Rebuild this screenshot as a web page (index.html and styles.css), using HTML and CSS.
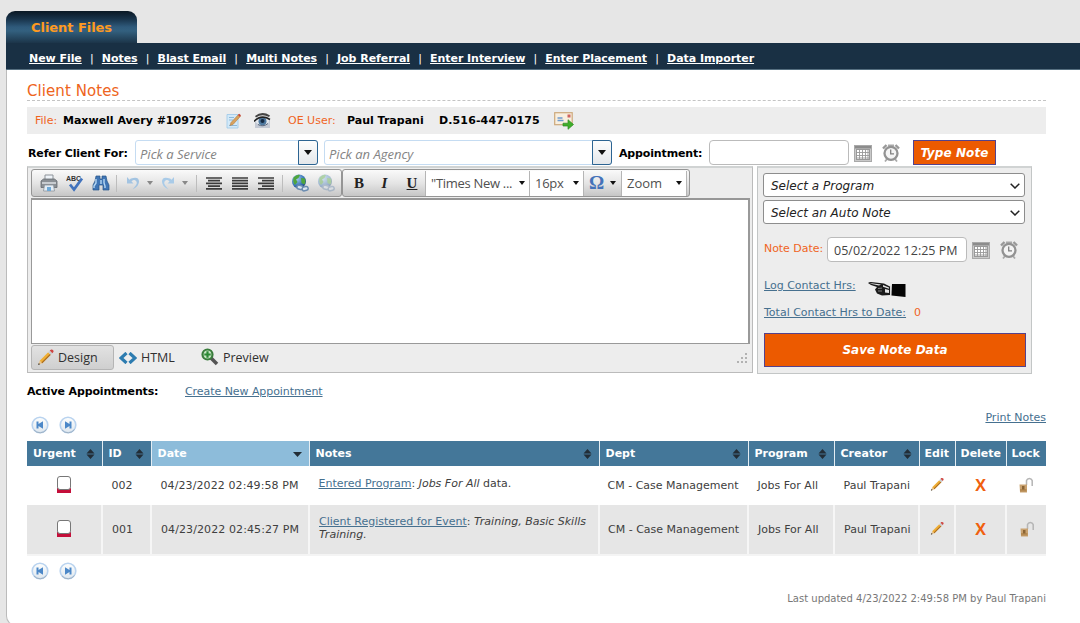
FILE: index.html
```html
<!DOCTYPE html>
<html lang="en">
<head>
    <meta charset="UTF-8">
    <title>Client Notes</title>
    <link rel="stylesheet" href="styles.css">
</head>
<body>

    <!-- shared icons -->
    <svg class="sprite" width="0" height="0">
        <defs>
            <linearGradient id="ball" x1="0" y1="0" x2="0" y2="1">
                <stop offset="0" stop-color="#fdfefe"/>
                <stop offset="1" stop-color="#dfe7ee"/>
            </linearGradient>
            <radialGradient id="globe" cx=".35" cy=".3" r=".8">
                <stop offset="0" stop-color="#a6cdf0"/>
                <stop offset=".6" stop-color="#3d78b8"/>
                <stop offset="1" stop-color="#1c3f78"/>
            </radialGradient>
        </defs>
        <symbol id="calendar" viewBox="0 0 18 17">
            <rect x=".5" y=".5" width="17" height="16" fill="#c9c9c9" stroke="#a9a9a9"/>
            <rect x="1" y="1" width="16" height="2.5" fill="#8c8c8c"/>
            <rect x="2.5" y="4.5" width="13" height="10" fill="#fff" stroke="#999"/>
            <path d="M5.5 4.500v10M8.500 4.500v10M11.500 4.500v10M14 4.500v10M2.500 7.500h13M2.500 10.500h13M2.500 13h13" stroke="#999" stroke-width=".9"/>
        </symbol>
        <symbol id="clock" viewBox="0 0 18 18">
            <path d="M1 4.500 4.500 1M17 4.500 13.500 1" stroke="#999" stroke-width="2.400"/>
            <path d="M3 17.500l2-2.500M15 17.500 13 15M6 1.500h6" stroke="#aaa" stroke-width="1.800"/>
            <circle cx="9" cy="9.300" r="6.500" fill="#f4f4f4" stroke="#929292" stroke-width="2.300"/>
            <path d="M8.700 5.500v4.300H12" fill="none" stroke="#808080" stroke-width="1.300"/>
        </symbol>
        <symbol id="pencil" viewBox="0 0 16 16">
            <path d="M1 15l1.500-4L5 13.500z" fill="#e9c58f"/>
            <path d="M1 15l.7-1.900 1.200 1.200z" fill="#333"/>
            <path d="M2.500 11 10.500 3 13 5.500 5 13.500z" fill="#efae35"/>
            <path d="M4.200 12.700 12.200 4.700 13 5.500 5 13.500z" fill="#a96b22"/>
            <path d="M10.500 3l1.500-1.500L14.500 4 13 5.500z" fill="#c9cdd0"/>
            <path d="M12 1.500 13 .700Q14.300.200 15.200 1.200T15 3.400L14.500 4z" fill="#cf4541"/>
        </symbol>
        <symbol id="prev" viewBox="0 0 18 18">
            <circle cx="9" cy="9" r="7.800" fill="url(#ball)" stroke="#b9d3ef" stroke-width="1.600"/>
            <path d="M3 14a8 8 0 0 0 12.500-.5" fill="none" stroke="#9fb1c2" stroke-width="1"/>
            <path d="M5.500 5.500h2V8l4.500-2.800v7.600L7.500 10v2.500h-2z" fill="#4c88c8"/>
        </symbol>
        <symbol id="next" viewBox="0 0 18 18">
            <circle cx="9" cy="9" r="7.800" fill="url(#ball)" stroke="#b9d3ef" stroke-width="1.600"/>
            <path d="M3 14a8 8 0 0 0 12.500-.5" fill="none" stroke="#9fb1c2" stroke-width="1"/>
            <path d="M12.500 5.500h-2V8L6 5.200v7.600l4.500-2.800v2.500h2z" fill="#4c88c8"/>
        </symbol>
        <symbol id="sort" viewBox="0 0 8 10">
            <path d="M4 0 8 4.500H0zM4 10 0 5.500h8z" fill="#222d36"/>
        </symbol>
        <symbol id="lock" viewBox="0 0 14 17">
            <path d="M7.500 9V4.500a3 3 0 0 1 5.700 0V10" fill="none" stroke="#b5b5b5" stroke-width="1.500"/>
            <path d="M.5 8.500h7.500v8H1z" fill="#c9a270"/>
            <path d="M1 13h6.500v2.500H1z" fill="#b58a52"/>
            <path d="M3 10h2.500v3.500H3z" fill="#8a6434"/>
        </symbol>
        <symbol id="world" viewBox="0 0 18 18">
            <circle cx="8" cy="7.500" r="7" fill="url(#globe)"/>
            <path d="M2.500 3.500Q6 0 9 1L7.500 4 5 5.500 6.500 8 4 11Q1.500 8 2.500 3.500zM10 4l4 .5q1 3-.5 6L10.500 9z" fill="#4fa63c"/>
            <rect x="6" y="11.500" width="6" height="3.800" rx="1.900" transform="rotate(15 9 13)" fill="#dbe5f0" stroke="#6b8cb0" stroke-width="1.500"/>
            <rect x="11" y="12.800" width="6" height="3.800" rx="1.900" transform="rotate(-15 14 14)" fill="#dbe5f0" stroke="#6b8cb0" stroke-width="1.500"/>
        </symbol>
    </svg>

    <div class="tab">Client Files</div>

    <div class="wrapper">
        <div class="nav">
            <a href="#">New File</a><i>|</i><a href="#">Notes</a><i>|</i><a href="#">Blast Email</a><i>|</i><a href="#">Multi Notes</a><i>|</i><a href="#">Job Referral</a><i>|</i><a href="#">Enter Interview</a><i>|</i><a href="#">Enter Placement</a><i>|</i><a href="#">Data Importer</a>
        </div>

        <div class="content">
            <h1>Client Notes</h1>

            <div class="infobar">
                <span class="orange file-label">File:</span>
                <b class="file-name">Maxwell Avery #109726</b>
                <svg class="icon-note" width="15" height="16" viewBox="0 0 15 16">
                    <path d="M1 1.500h11V15H1z" fill="#d3e9f8" stroke="#9cc8e8" stroke-width=".8"/>
                    <path d="M3 4.500h5M3 7h4M3 12.500h8" stroke="#8fb9d9"/>
                    <path d="M4 12.500 5 9.500 12.500 1.500 14.500 3.200 7 11.500z" fill="#d9a25c" stroke="#a97236" stroke-width=".5"/>
                    <path d="M12 2l1.200-1.300 1.800 1.600-1.200 1.400z" fill="#c9423a"/>
                </svg>
                <svg class="icon-eye" width="17" height="17" viewBox="0 0 17 17">
                    <path d="M1 16V9l4-3h9l2 1v9z" fill="#c3c9d4"/>
                    <path d="M1 4Q8-1.500 16 3.500L15 5Q8 1.500 2 5.500z" fill="#444"/>
                    <path d="M.5 9Q7 3 15.500 7.500L14 12Q8 15.500 4 12z" fill="#e5e9ee"/>
                    <circle cx="8.500" cy="9.300" r="4" fill="#4d789f"/>
                    <circle cx="8.500" cy="9" r="2" fill="#152a42"/>
                    <path d="M0 9.500Q7 2 16 7.500" fill="none" stroke="#222" stroke-width="1.600"/>
                    <path d="M4 12.500Q9 15.500 14 11.500" fill="none" stroke="#55637a"/>
                </svg>
                <span class="orange user-label">OE User:</span>
                <b class="user-name">Paul Trapani</b>
                <b class="phone">D.516-447-0175</b>
                <svg class="icon-mail" width="20" height="18" viewBox="0 0 20 18">
                    <rect x=".7" y=".7" width="17.500" height="12" fill="#f9efdf" stroke="#cda87b" stroke-width="1.200"/>
                    <path d="M3.500 6h5M3.500 8.500h6" stroke="#6d9bd0" stroke-width="1.300"/>
                    <rect x="13.500" y="2.500" width="3" height="3" fill="#d0635f"/>
                    <path d="M9 11.200h5V7.700l5.500 4.800-5.500 4.800v-3.300H9z" fill="#3fae2a" stroke="#2d8a20" stroke-width=".7"/>
                </svg>
            </div>

            <div class="refer">
                <b class="refer-label">Refer Client For:</b>
                <div class="combo service"><span>Pick a Service</span><em></em></div>
                <div class="combo agency"><span>Pick an Agency</span><em></em></div>
                <b class="app-label">Appointment:</b>
                <div class="textbox"></div>
                <svg class="cal" width="18" height="17"><use href="#calendar"/></svg>
                <svg class="clk" width="18" height="18"><use href="#clock"/></svg>
                <button class="btn type-note">Type Note</button>
            </div>

            <div class="main">
                <div class="editor">
                    <div class="toolbar">
                        <div class="group tools">
                            <svg width="18" height="18" viewBox="0 0 18 18">
                                <path d="M5 1h8v6H5z" fill="#eef3f8" stroke="#8d9399"/>
                                <path d="M1 7l2.500-2h11L17 7v6.500H1z" fill="#8b9095" stroke="#656a6e" stroke-width=".8"/>
                                <path d="M2 8h14v2H2z" fill="#c8ccd0"/>
                                <path d="M4.500 11h9l1 6h-11z" fill="#e3edf6" stroke="#8d9399" stroke-width=".8"/>
                                <path d="M7 13h4v4H7z" fill="#6fa9d6"/>
                            </svg>
                            <svg width="18" height="18" viewBox="0 0 18 18">
                                <text x="0" y="6.500" class="abc">ABC</text>
                                <path d="M4 10.500 8 15.500 16 4.500" fill="none" stroke="#4273bd" stroke-width="2.800"/>
                            </svg>
                            <svg width="18" height="18" viewBox="0 0 18 18">
                                <path d="M4 2h4v3h2V2h4l1 5 2 4v5h-6v-5H7v5H1v-5l2-4z" fill="#3f75b5" stroke="#275486" stroke-width=".7"/>
                                <path d="M4 5v4l-2 3v2M12 5v4l1 3v2M9 6v4" fill="none" stroke="#b4d6f3" stroke-width="1.400"/>
                            </svg>
                            <s></s>
                            <svg class="undo" width="14" height="16" viewBox="0 0 14 16">
                                <path d="M1 2v6.500h6.500L5.500 6.500Q8 4 10 6T9 11.500L6.500 14.500Q13.500 11 13 6T5 3.500L3.500 4.800z" fill="#a3c4e2"/>
                            </svg>
                            <u class="dim"></u>
                            <svg class="redo" width="14" height="16" viewBox="0 0 14 16">
                                <path d="M13 2v6.500H6.500l2-2Q6 4 4 6t1 5.500l2.500 3Q.5 11 1 6t8-2.500l1.500 1.300z" fill="#a9cbe8"/>
                            </svg>
                            <u class="dim"></u>
                            <s class="second"></s>
                            <svg class="lines" width="16" height="13" viewBox="0 0 16 13"><path d="M0 1h16M2 3.700h12M0 6.400h16M2 9.100h12M0 11.800h16" stroke="#3c3c3c" stroke-width="1.700"/></svg>
                            <svg class="lines" width="16" height="13" viewBox="0 0 16 13"><path d="M0 1h16M0 3.700h16M0 6.400h16M0 9.100h16M0 11.800h16" stroke="#3c3c3c" stroke-width="1.700"/></svg>
                            <svg class="lines" width="16" height="13" viewBox="0 0 16 13"><path d="M0 1h16M4 3.700h12M0 6.400h16M4 9.100h12M0 11.800h16" stroke="#3c3c3c" stroke-width="1.700"/></svg>
                            <s class="third"></s>
                            <svg class="link" width="18" height="18"><use href="#world"/></svg>
                            <svg class="unlink" width="18" height="18"><use href="#world"/></svg>
                        </div>
                        <div class="group format">
                            <span class="bold">B</span>
                            <span class="italic">I</span>
                            <span class="under">U</span>
                            <div class="drop font">"Times New ...<u></u></div>
                            <div class="drop size">16px<u></u></div>
                            <div class="omega">Ω<u></u></div>
                            <div class="drop zoom">Zoom<u></u></div>
                        </div>
                    </div>
                    <div class="area"></div>
                    <div class="modes">
                        <div class="mode active">
                            <svg width="17" height="17"><use href="#pencil"/></svg>Design
                        </div>
                        <div class="mode html">
                            <svg width="18" height="12" viewBox="0 0 18 12"><path d="M7.500 1 2 6l5.500 5M10.500 1 16 6l-5.500 5" fill="none" stroke="#2d7cb0" stroke-width="3.200"/></svg>HTML
                        </div>
                        <div class="mode preview">
                            <svg width="18" height="18" viewBox="0 0 18 18">
                                <path d="M10 10l6 6" stroke="#555" stroke-width="3.500"/>
                                <circle cx="6.500" cy="6.500" r="5" fill="#c9e6c6" stroke="#3a7d3c" stroke-width="2.200"/>
                                <path d="M6.500 3.300v6.400M3.300 6.500h6.400" stroke="#2c8a35" stroke-width="2.200"/>
                            </svg>Preview
                        </div>
                        <svg class="grip" width="12" height="12" viewBox="0 0 12 12"><path d="M9 1h2M9 5h2M5 5h2M9 9h2M5 9h2M1 9h2" stroke="#b2b2b2" stroke-width="2"/></svg>
                    </div>
                </div>

                <div class="side">
                    <div class="select">Select a Program<svg width="10" height="6" viewBox="0 0 10 6"><path d="M.7.700 5 5 9.300.700" fill="none" stroke="#222" stroke-width="1.500"/></svg></div>
                    <div class="select">Select an Auto Note<svg width="10" height="6" viewBox="0 0 10 6"><path d="M.7.700 5 5 9.300.700" fill="none" stroke="#222" stroke-width="1.500"/></svg></div>
                    <div class="date-row">
                        <span class="orange">Note Date:</span>
                        <div class="textbox">05/02/2022 12:25 PM</div>
                        <svg class="cal" width="18" height="17"><use href="#calendar"/></svg>
                        <svg class="clk" width="18" height="18"><use href="#clock"/></svg>
                    </div>
                    <div class="log-row">
                        <a href="#">Log Contact Hrs:</a>
                        <svg width="38" height="17" viewBox="0 0 38 17">
                            <path d="M0 2Q1 1 3 1L16 2.500 22 5.500V14l-8 .5-5-2-2-4L9 6 3 4z" fill="#1b1b1b"/>
                            <path d="M1.500 2 13 3.500 11 4.500 4 3zM15 4l6 2.500v1.200l-6-2zM17 8l4 1v3l-4-.5z" fill="#e4e4e4"/>
                            <path d="M10 7.500l4-.4M10 10h4" stroke="#999" stroke-width=".8"/>
                            <path d="M22 5 24 4v10l-2 .5z" fill="#ddd"/>
                            <path d="M24 3h13.500v13L23.500 14.500z" fill="#050505"/>
                        </svg>
                    </div>
                    <div class="total-row"><a href="#">Total Contact Hrs to Date:</a><span class="orange">0</span></div>
                    <button class="btn save">Save Note Data</button>
                </div>
            </div>

            <div class="appointments">
                <b>Active Appointments:</b>
                <a href="#">Create New Appointment</a>
            </div>

            <div class="pager top">
                <svg width="18" height="18"><use href="#prev"/></svg>
                <svg width="18" height="18"><use href="#next"/></svg>
                <a href="#">Print Notes</a>
            </div>

            <table>
                <colgroup>
                    <col class="c-urgent"><col class="c-id"><col class="c-date"><col class="c-notes"><col class="c-dept">
                    <col class="c-program"><col class="c-creator"><col class="c-edit"><col class="c-delete"><col class="c-lock">
                </colgroup>
                <thead>
                    <tr>
                        <th><div>Urgent<svg width="9" height="10"><use href="#sort"/></svg></div></th>
                        <th><div>ID<svg width="9" height="10"><use href="#sort"/></svg></div></th>
                        <th class="sorted"><div>Date<svg width="9" height="5" viewBox="0 0 9 5"><path d="M0 0h9L4.500 5z" fill="#222d36"/></svg></div></th>
                        <th><div>Notes<svg width="9" height="10"><use href="#sort"/></svg></div></th>
                        <th><div>Dept<svg width="9" height="10"><use href="#sort"/></svg></div></th>
                        <th><div>Program<svg width="9" height="10"><use href="#sort"/></svg></div></th>
                        <th><div>Creator<svg width="9" height="10"><use href="#sort"/></svg></div></th>
                        <th><div>Edit</div></th>
                        <th><div>Delete</div></th>
                        <th><div>Lock</div></th>
                    </tr>
                </thead>
                <tbody>
                    <tr>
                        <td class="center"><span class="check"></span></td>
                        <td>002</td>
                        <td class="date">04/23/2022 02:49:58 PM</td>
                        <td class="note"><a href="#">Entered Program</a>: <em>Jobs For All</em> data.</td>
                        <td class="dept">CM - Case Management</td>
                        <td>Jobs For All</td>
                        <td>Paul Trapani</td>
                        <td class="center"><svg width="14" height="15"><use href="#pencil"/></svg></td>
                        <td class="center"><b class="x">X</b></td>
                        <td class="center"><svg width="14" height="17"><use href="#lock"/></svg></td>
                    </tr>
                    <tr class="alt">
                        <td class="center"><span class="check"></span></td>
                        <td>001</td>
                        <td class="date">04/23/2022 02:45:27 PM</td>
                        <td class="note"><a href="#">Client Registered for Event</a>: <em>Training, Basic Skills<br>Training.</em></td>
                        <td class="dept">CM - Case Management</td>
                        <td>Jobs For All</td>
                        <td>Paul Trapani</td>
                        <td class="center"><svg width="14" height="15"><use href="#pencil"/></svg></td>
                        <td class="center"><b class="x">X</b></td>
                        <td class="center"><svg width="14" height="17"><use href="#lock"/></svg></td>
                    </tr>
                </tbody>
            </table>

            <div class="pager bottom">
                <svg width="18" height="18"><use href="#prev"/></svg>
                <svg width="18" height="18"><use href="#next"/></svg>
            </div>

            <div class="updated">Last updated 4/23/2022 2:49:58 PM by Paul Trapani</div>
        </div>
    </div>

</body>
</html>
```
FILE: styles.css
```css
* {
    box-sizing: border-box;
}

body {
    margin: 0;
    padding: 11px 0 0 6px;
    height: 623px;
    overflow: hidden;
    background-color: #e6e6e6;
    font-family: Verdana, "DejaVu Sans", sans-serif;
    font-size: 11px;
    line-height: 14px;
    color: #000;
    white-space: nowrap;
}

a {
    color: #46708f;
}
svg {
    display: block;
    flex-shrink: 0;
}
.sprite {
    position: absolute;
}
.orange {
    color: #f0641e;
}

.tab {
    width: 131px;
    height: 32px;
    border-radius: 9px 9px 0 0;
    background: linear-gradient(#0a1824, #18334a 25%, #2f5a7b 50%, #33607f 62%, #1c3549 100%);
    color: #ff9a1f;
    font-size: 13px;
    font-weight: bold;
    line-height: 33px;
    padding-left: 25px;
    letter-spacing: -0.05px;
}

.wrapper {
    height: 583px;
    background-color: #fff;
    border-left: 1px solid #bbb;
    border-bottom: 1px solid #aaa;
    border-bottom-left-radius: 10px;
}
.nav {
    height: 27px;
    margin-left: -1px;
    padding: 9px 0 0 23px;
    background-color: #193044;
    border-bottom: 1px solid #566f80;
    color: #fff;
    font-weight: bold;
    letter-spacing: -0.05px;
}
.nav a {
    color: #fff;
}
.nav i {
    display: inline-block;
    width: 20px;
    text-align: center;
    font-style: normal;
    font-weight: normal;
}

.content {
    width: 1019px;
    margin-left: 20px;
}
h1 {
    height: 31px;
    margin: 0 0 6px;
    padding-top: 11px;
    border-bottom: 1px dashed #c4c4c4;
    color: #ee6420;
    font-size: 15px;
    font-weight: normal;
    line-height: 20px;
    letter-spacing: 0.08px;
}

.infobar {
    display: flex;
    align-items: center;
    height: 27px;
    padding-left: 8px;
    background-color: #ededed;
}
.file-label {
    width: 28px;
}
.file-name {
    width: 163px;
}
.icon-eye {
    margin-left: 13px;
}
.user-label {
    margin-left: 17px;
    width: 59px;
}
.user-name {
    width: 92px;
}
.phone {
    width: 115px;
    letter-spacing: 0.13px;
}

.refer {
    display: flex;
    height: 25px;
    margin-top: 6px;
    line-height: 27px;
}
.refer-label {
    width: 108px;
    padding-left: 1px;
    letter-spacing: -0.12px;
}
.combo {
    display: flex;
    border: 1px solid #c5dcf2;
    border-radius: 3px;
    background-color: #fff;
    font: italic 13px/26px "Open Sans", sans-serif;
    color: #848484;
}
.combo span {
    flex: 1;
    padding-left: 4px;
}
.combo em {
    width: 20px;
    margin: -1px;
    border: 1px solid #2c6492;
    border-radius: 0 3px 3px 0;
    background: linear-gradient(#fdfdfd, #e4e7ea);
}
.combo em::after,
u::after {
    content: "";
    display: block;
    margin: 9px auto 0;
    width: 0;
    border: 4px solid transparent;
    border-top: 5px solid #111;
    border-bottom: 0;
}
.service {
    width: 183px;
    margin-right: 6px;
}
.agency {
    width: 288px;
}
.app-label {
    width: 97px;
    padding-left: 7px;
    letter-spacing: -0.15px;
}
.textbox {
    width: 140px;
    height: 25px;
    border: 1px solid #bbb;
    border-radius: 4px;
    background-color: #fff;
}
.cal {
    margin: 5px 0 0 5px;
}
.clk {
    margin: 4px 0 0 10px;
}
.btn {
    padding: 0;
    border: 1px solid #54428c;
    background-color: #ec5a00;
    color: #fff;
    font: italic bold 12px Verdana, "DejaVu Sans", sans-serif;
}
.type-note {
    width: 83px;
    margin-left: 13px;
    letter-spacing: 0.1px;
}

.main {
    display: flex;
    gap: 4px;
    margin-top: 1px;
}
.editor {
    width: 726px;
    height: 207px;
    padding: 1px 2px 0 3px;
    border: 1px solid #bbb;
    border-top: 2px solid #d0d3d3;
    background-color: #ededed;
}
.toolbar {
    display: flex;
    height: 28px;
    margin-bottom: 1px;
}
.group {
    display: flex;
    align-items: center;
    height: 28px;
    border: 1px solid #959595;
    border-radius: 3px;
    background: linear-gradient(#fafafa, #e5e5e5 50%, #c6c6c6);
}
.tools {
    width: 311px;
    padding-left: 8px;
    gap: 8px;
}
.tools s {
    width: 1px;
    height: 17px;
    margin: 0 1px 0 -2px;
    background-color: #bdbdbd;
}
.tools .second {
    margin-left: 0;
}
.tools .third {
    margin-right: 0;
}
.abc {
    font: bold 7px "Liberation Sans", sans-serif;
    fill: #333;
}
.undo,
.redo {
    margin-right: -1px;
}
u {
    display: block;
}
u::after {
    margin: 0;
    border-width: 4px 3.5px 0;
}
u.dim::after {
    border-top-color: #888;
}
.lines {
    margin-right: 2px;
}
.unlink {
    opacity: .4;
}

.format {
    width: 348px;
    padding-left: 11px;
    font: 13px/24px "Open Sans", sans-serif;
    color: #505050;
}
.bold,
.italic,
.under {
    width: 20px;
    font: bold 15px/24px "Liberation Serif", serif;
    color: #222;
}
.italic {
    width: 21px;
    font-style: italic;
    text-align: center;
}
.under {
    width: 30px;
    padding-left: 4px;
    text-decoration: underline;
    text-align: center;
}
.drop {
    display: flex;
    justify-content: space-between;
    align-items: center;
    height: 25px;
    padding: 0 4px 0 5px;
    border-right: 1px solid #b5b5b5;
    border-left: 1px solid #b5b5b5;
    background-color: #fff;
}
.font {
    width: 105px;
    letter-spacing: -0.3px;
}
.size {
    width: 54px;
    border-left: 0;
    letter-spacing: -0.3px;
}
.omega {
    display: flex;
    align-items: center;
    gap: 6px;
    width: 37px;
    padding-left: 5px;
    font: bold 19px/24px "Liberation Serif", serif;
    color: #4472b9;
}
.zoom {
    width: 66px;
}

.area {
    height: 146px;
    border: 1px solid #999;
    border-top: 2px solid #979797;
    border-right-width: 2px;
    background-color: #fff;
}
.modes {
    display: flex;
    padding-top: 1px;
    font: 12.5px/24px "Open Sans", sans-serif;
    color: #303030;
}
.mode {
    display: flex;
    align-items: center;
    height: 25px;
}
.active {
    width: 83px;
    padding-left: 5px;
    gap: 4px;
    border: 1px solid #b5b5b5;
    border-radius: 3px;
    background: linear-gradient(#e2e2e2, #cfcfcf);
}
.html {
    margin-left: 5px;
    gap: 4px;
}
.preview {
    margin-left: 26px;
    gap: 4px;
}
.preview svg {
    margin-top: -2px;
}
.grip {
    margin: 8px 2px 0 auto;
}

.side {
    width: 275px;
    height: 208px;
    padding: 5px 5px 0;
    border: 1px solid #c3c6c6;
    border-top: 2px solid #d0d3d3;
    background-color: #ededed;
}
.select {
    display: flex;
    align-items: center;
    justify-content: space-between;
    width: 262px;
    height: 24px;
    margin-bottom: 3px;
    padding: 2px 4px 0 7px;
    border: 1px solid #8d8d8d;
    border-radius: 3px;
    background-color: #fff;
    font-size: 12px;
    font-style: italic;
    color: #222;
}
.date-row {
    display: flex;
    margin-top: 13px;
}
.date-row .orange {
    width: 64px;
    padding: 5px 0 0 1px;
    letter-spacing: -0.05px;
}
.date-row .textbox {
    padding-left: 6px;
    font: 12.5px/26px "Open Sans", sans-serif;
    color: #444;
}
.log-row {
    display: flex;
    gap: 12px;
    height: 27px;
    margin-top: 17px;
    padding-left: 1px;
}
.log-row svg {
    margin-top: 2px;
}
.total-row {
    display: flex;
    gap: 8px;
    padding-left: 1px;
}
.save {
    display: block;
    width: 262px;
    height: 34px;
    margin: 13px 0 0 1px;
}

.appointments {
    display: flex;
    margin-top: 11px;
}
.appointments b {
    width: 158px;
    letter-spacing: -0.14px;
}
.appointments a {
    letter-spacing: -0.06px;
}
.pager {
    display: flex;
    gap: 10px;
    padding-left: 4px;
}
.top {
    margin-top: 17px;
    height: 25px;
}
.top a {
    margin: -5px 0 0 auto;
}

table {
    width: 1019px;
    table-layout: fixed;
    border-collapse: collapse;
    color: #404040;
}
.c-urgent { width: 75px; }
.c-id { width: 49px; }
.c-date { width: 158px; }
.c-notes { width: 290px; }
.c-dept { width: 149px; }
.c-program { width: 86px; }
.c-creator { width: 85px; }
.c-edit { width: 36px; }
.c-delete { width: 51px; }
.c-lock { width: 40px; }
th {
    height: 25px;
    padding: 1px 7px 0 6px;
    border-right: 1px solid #e4edf3;
    border-left: 1px solid #e4edf3;
    background-color: #447799;
    color: #fff;
    text-align: left;
}
th:first-child {
    border-left: 0;
}
th:nth-child(n+8) {
    padding-right: 0;
    padding-left: 5px;
}
th:last-child,
td:last-child {
    border-right: 0;
}
th div {
    display: flex;
    align-items: center;
    justify-content: space-between;
}
th.sorted {
    background-color: #8dbcda;
}
td {
    height: 39px;
    padding: 1px 0 0 9px;
    border-right: 1px solid #fff;
}
tr.alt td {
    height: 50px;
    border-right: 2px solid #f6f6f6;
    border-bottom: 2px solid #f4f4f4;
    background-color: #e6e6e6;
}
tr.alt td:last-child {
    border-right: 0;
}
td.date {
    letter-spacing: 0.1px;
}
td.dept {
    padding-left: 8px;
}
td.center {
    padding: 0 0 2px;
    text-align: center;
}
td.center svg {
    margin: 0 auto;
}
td.note {
    line-height: 13px;
    padding-bottom: 5px;
}
.check {
    display: block;
    width: 14px;
    height: 17px;
    margin: 0 auto;
    background: linear-gradient(transparent 12px, #c40f3a 12px);
}
.check::before {
    content: "";
    display: block;
    width: 12px;
    height: 12px;
    border: 1px solid #777;
    border-radius: 3px;
    background-color: #fff;
}
.x {
    display: block;
    color: #f0600f;
    font: bold 16px/16px "Open Sans", sans-serif;
}
.bottom {
    margin-top: 6px;
    height: 18px;
}
.updated {
    margin-top: 12px;
    text-align: right;
    font-size: 10px;
    color: #777;
}
```
